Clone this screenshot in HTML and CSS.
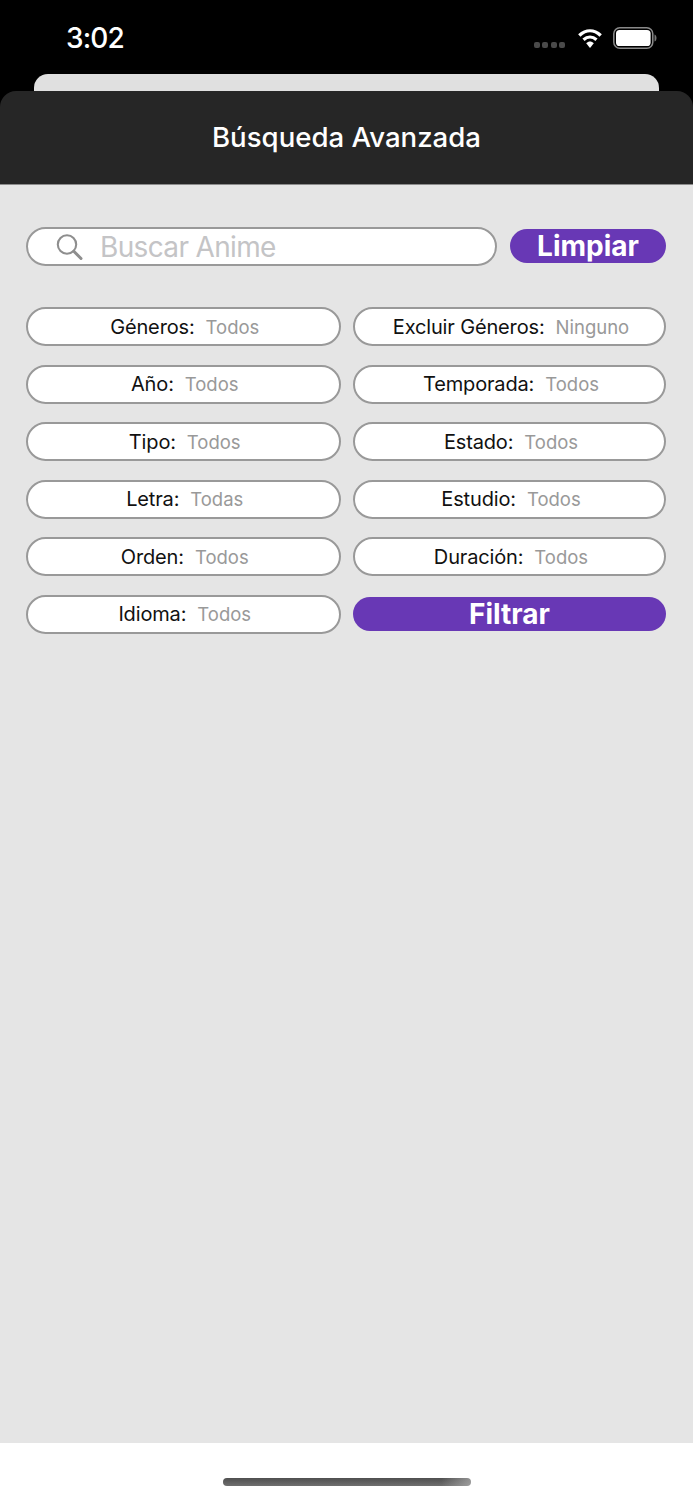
FILE: index.html
```html
<!DOCTYPE html>
<html lang="es">
<head>
<meta charset="utf-8">
<title>Búsqueda Avanzada</title>
<link rel="stylesheet" href="styles.css">
</head>
<body>
<div class="screen">
  <div class="status">
    <span class="time">3:02</span>
    <div class="status-icons">
      <div class="signal"><i></i><i></i><i></i><i></i></div>
      <svg class="wifi" width="24" height="21" viewBox="0 0 24 21"><path d="M1.300 7.500C8 1.300 16 1.300 22.700 7.500" fill="none" stroke="#fff" stroke-width="3.400"/><path d="M5.500 11.800C9.500 8.200 14.500 8.200 18.500 11.800" fill="none" stroke="#fff" stroke-width="3.200"/><path d="M8.200 15.300C10.700 13 13.300 13 15.800 15.300L12 20Z" fill="#fff"/></svg>
      <svg class="battery" width="44" height="22" viewBox="0 0 44 22"><rect x="0.800" y="0.800" width="39" height="20.400" rx="6" fill="none" stroke="#8a8a8a" stroke-width="1.500"/><rect x="3" y="3" width="34.600" height="16" rx="3.600" fill="#fff"/><path d="M41.500 7.500C43 8 43.500 9.500 43.500 11C43.500 12.500 43 14 41.500 14.500Z" fill="#777"/></svg>
    </div>
  </div>
  <div class="peek"></div>
  <div class="sheet">
    <header class="sheet-head"><h1>Búsqueda Avanzada</h1></header>
    <main class="content">
      <div class="search-row">
        <div class="search">
          <svg class="search-icon" width="28" height="28" viewBox="0 0 28 28"><circle cx="12" cy="11.500" r="9.200" fill="none" stroke="#8e8e8e" stroke-width="2.100"/><path d="M18.800 18.300L26 25.500" fill="none" stroke="#8e8e8e" stroke-width="3" stroke-linecap="round"/></svg>
          <span class="placeholder">Buscar Anime</span>
        </div>
        <button class="btn btn-clear">Limpiar</button>
      </div>
      <div class="filters">
        <div class="chip"><span class="label">Géneros:</span><span class="value">Todos</span></div>
        <div class="chip"><span class="label">Excluir Géneros:</span><span class="value">Ninguno</span></div>
        <div class="chip"><span class="label">Año:</span><span class="value">Todos</span></div>
        <div class="chip"><span class="label">Temporada:</span><span class="value">Todos</span></div>
        <div class="chip"><span class="label">Tipo:</span><span class="value">Todos</span></div>
        <div class="chip"><span class="label">Estado:</span><span class="value">Todos</span></div>
        <div class="chip"><span class="label">Letra:</span><span class="value">Todas</span></div>
        <div class="chip"><span class="label">Estudio:</span><span class="value">Todos</span></div>
        <div class="chip"><span class="label">Orden:</span><span class="value">Todos</span></div>
        <div class="chip"><span class="label">Duración:</span><span class="value">Todos</span></div>
        <div class="chip"><span class="label">Idioma:</span><span class="value">Todos</span></div>
        <button class="btn btn-filter">Filtrar</button>
      </div>
    </main>
    <footer class="foot"><div class="home"></div></footer>
  </div>
</div>
</body>
</html>
```

FILE: styles.css
```css
* { box-sizing: border-box; }
html, body { margin: 0; padding: 0; background: #000; }
body { font-family: Inter, "Liberation Sans", sans-serif; }
.screen { width: 693px; height: 1500px; display: flex; flex-direction: column; overflow: hidden; background: #000; }

.status { height: 74px; flex: none; display: flex; justify-content: space-between; padding: 21px 36px 0 66px; }
.time { color: #fff; font-size: 28px; line-height: 34px; font-weight: 500; letter-spacing: -0.900px; }
.status-icons { display: flex; align-items: flex-start; }
.signal { display: flex; gap: 2.500px; margin: 21px 13px 0 0; }
.signal i { width: 6px; height: 6px; border-radius: 2px; background: #4a4a4a; }
.wifi { margin: 6.500px 0 0 0; }
.battery { margin: 6px 0 0 11px; }

.peek { height: 17px; flex: none; margin: 0 34px; background: #e0e0e0; border-radius: 14px 14px 0 0; }

.sheet { flex: 1; display: flex; flex-direction: column; border-radius: 16px 16px 0 0; overflow: hidden; }
.sheet-head { height: 94px; flex: none; background: #262626; display: flex; align-items: center; justify-content: center; border-bottom: 1px solid #8c8c8c; }
.sheet-head h1 { margin: 0; color: #fff; font-size: 27.600px; line-height: 33px; font-weight: 500; }

.content { flex: 1; background: #e5e5e5; padding: 42px 27px 0 26px; }
.search-row { display: flex; align-items: flex-start; gap: 13px; }
.search { flex: 1; height: 39px; background: #fff; border: 2px solid #999; border-radius: 20px; display: flex; align-items: center; padding-left: 27px; }
.search-icon { flex: none; }
.placeholder { margin-left: 17px; color: #c4c4c6; font-size: 28px; line-height: 34px; letter-spacing: -0.650px; }

.btn { border: 0; padding: 0; color: #fff; background: #6838b5; font-family: inherit; font-weight: 700; font-size: 28px; border-radius: 17px; height: 34px; line-height: 34px; }
.btn-clear { width: 156px; flex: none; margin-top: 2px; }

.filters { display: grid; grid-template-columns: 314.500px 313px; column-gap: 12.500px; row-gap: 18.500px; margin-top: 41px; align-items: center; }
.chip { height: 39px; background: #fff; border: 2px solid #999; border-radius: 20px; display: flex; align-items: center; justify-content: center; gap: 11px; padding-left: 3px; }
.label { color: #111; font-size: 20px; line-height: 24px; letter-spacing: -0.150px; }
.value { color: #999; font-size: 18.500px; line-height: 24px; }

.foot { height: 57px; flex: none; background: #fff; padding-top: 35px; display: flex; justify-content: center; }
.home { width: 248px; height: 8px; border-radius: 4px; background: linear-gradient(90deg, rgba(92,92,92,0) 0%, rgba(92,92,92,0) 88%, rgba(190,190,190,0.600) 100%), linear-gradient(180deg, #4f4f4f 0%, #6e6e6e 100%); }
```
